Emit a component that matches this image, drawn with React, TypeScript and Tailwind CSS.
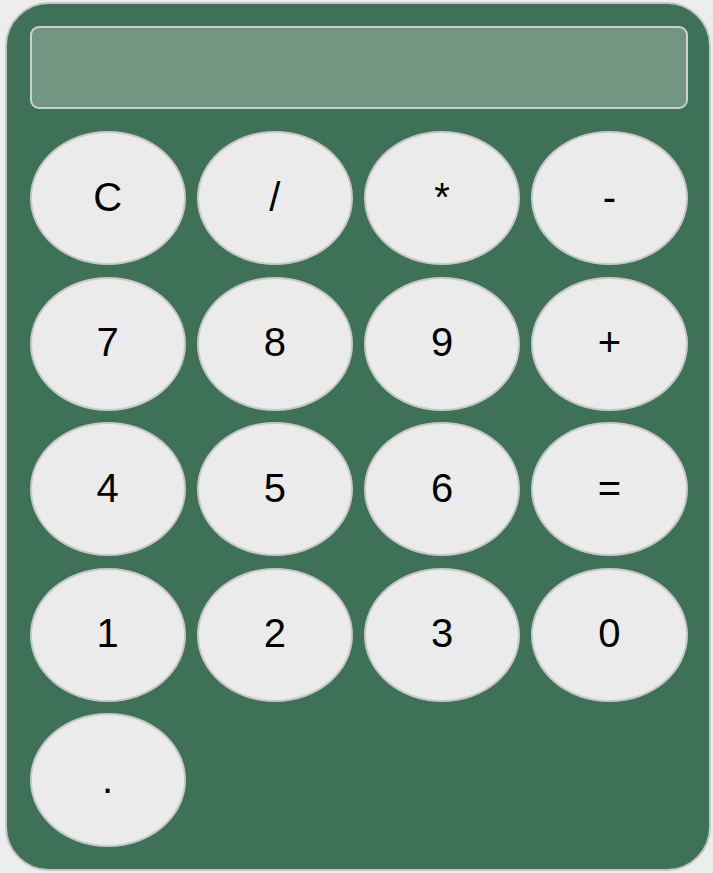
import React from "react";

const keys = ["C", "/", "*", "-", "7", "8", "9", "+", "4", "5", "6", "=", "1", "2", "3", "0", "."];

export default function App() {
  return (
    <div className="min-h-screen w-[713px] bg-[#ededed] pt-[2px] pl-[5px]" style={{ fontFamily: '"Liberation Sans", Arial, sans-serif' }}>
      <div className="box-border h-[869px] w-[706px] rounded-[44px] border-2 border-[#c6c6c6] bg-[#3e7157] pl-[22.5px] pt-[22px]">
        <div className="box-border h-[83px] w-[658px] rounded-[9px] border-2 border-[#cfcfcf] bg-[#739683]" />
        <div className="mt-[22px] grid w-[658px] grid-cols-4 gap-x-[11px] gap-y-[11.5px]">
          {keys.map((k) => (
            <button
              key={k}
              className="box-border flex h-[134px] items-center justify-center rounded-[50%] border-2 border-[#c8c8c8] bg-[#ebebeb] pb-[3px] text-[40px] leading-none text-black"
            >
              {k}
            </button>
          ))}
        </div>
      </div>
    </div>
  );
}
